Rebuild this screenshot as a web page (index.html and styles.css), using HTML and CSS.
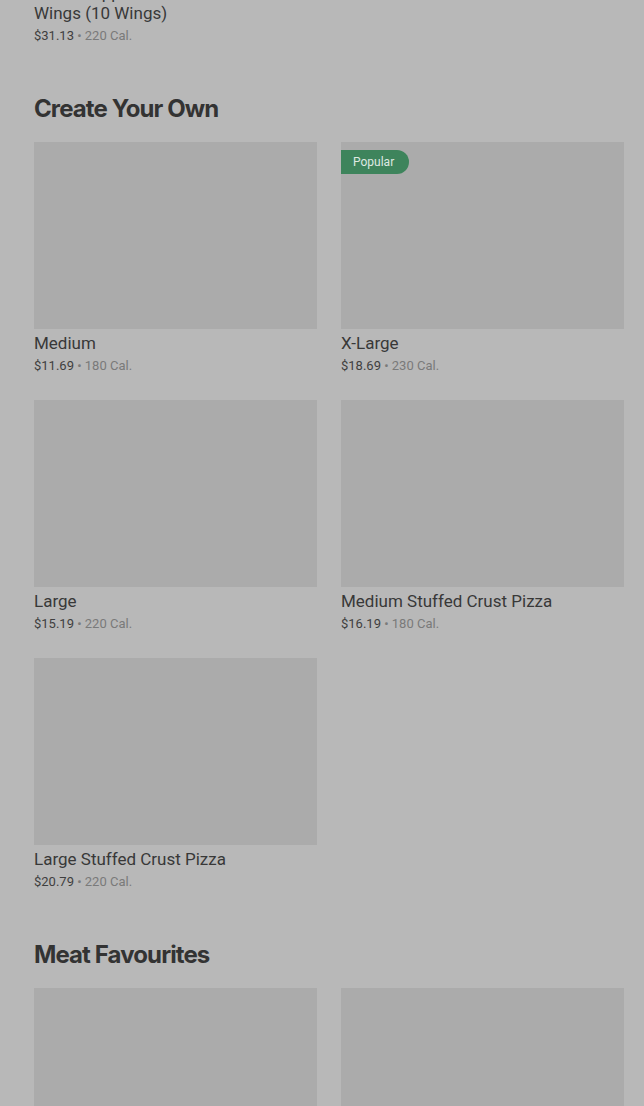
FILE: index.html
```html
<!DOCTYPE html>
<html lang="en">
<head>
<meta charset="utf-8">
<title>Menu</title>
<link rel="stylesheet" href="styles.css">
</head>
<body>
<main class="menu">
  <div class="lead-item">
    <div class="item-title">Salt &amp; Pepper Boneless Chicken<br>Wings (10 Wings)</div>
    <div class="item-meta"><span class="price">$31.13</span> • 220 Cal.</div>
  </div>

  <section class="section">
    <h2 class="section-title">Create Your Own</h2>
    <div class="grid">
      <div class="card">
        <div class="thumb"></div>
        <div class="item-title">Medium</div>
        <div class="item-meta"><span class="price">$11.69</span> • 180 Cal.</div>
      </div>
      <div class="card">
        <div class="thumb"><span class="badge">Popular</span></div>
        <div class="item-title">X-Large</div>
        <div class="item-meta"><span class="price">$18.69</span> • 230 Cal.</div>
      </div>
      <div class="card">
        <div class="thumb"></div>
        <div class="item-title">Large</div>
        <div class="item-meta"><span class="price">$15.19</span> • 220 Cal.</div>
      </div>
      <div class="card">
        <div class="thumb"></div>
        <div class="item-title">Medium Stuffed Crust Pizza</div>
        <div class="item-meta"><span class="price">$16.19</span> • 180 Cal.</div>
      </div>
      <div class="card">
        <div class="thumb"></div>
        <div class="item-title">Large Stuffed Crust Pizza</div>
        <div class="item-meta"><span class="price">$20.79</span> • 220 Cal.</div>
      </div>
    </div>
  </section>

  <section class="section">
    <h2 class="section-title">Meat Favourites</h2>
    <div class="grid">
      <div class="card">
        <div class="thumb"></div>
      </div>
      <div class="card">
        <div class="thumb"></div>
      </div>
    </div>
  </section>
</main>
</body>
</html>
```
FILE: styles.css
```css
html, body {
  margin: 0;
  padding: 0;
  background: #b8b8b8;
  overflow: hidden;
}
body {
  font-family: Roboto, "Liberation Sans", sans-serif;
  color: #363636;
}
.menu {
  padding: 0 20px 0 34px;
}
.lead-item {
  margin-top: -17px;
}
.item-title {
  font-size: 17px;
  line-height: 20px;
  color: #383838;
  margin-top: 4px;
}
.lead-item .item-title {
  margin-top: 0;
}
.item-meta {
  font-size: 13px;
  line-height: 20px;
  margin-top: 3px;
  color: #7a7a7a;
}
.price {
  color: #3f3f3f;
}
.section {
  padding-top: 47px;
}
.section-title {
  margin: 0 0 17px;
  font-family: Inter, "Liberation Sans", sans-serif;
  font-size: 24px;
  line-height: 32px;
  font-weight: 700;
  letter-spacing: -0.9px;
  color: #333333;
}
.grid {
  display: grid;
  grid-template-columns: 283px 283px;
  column-gap: 24px;
  row-gap: 24px;
}
.thumb {
  position: relative;
  height: 187px;
  background: #ababab;
}
.badge {
  position: absolute;
  top: 8px;
  left: 0;
  height: 24px;
  line-height: 24px;
  padding: 0 15px 0 12px;
  border-radius: 0 12px 12px 0;
  background: #3e845c;
  color: #dfe9e2;
  font-size: 12px;
}
```
